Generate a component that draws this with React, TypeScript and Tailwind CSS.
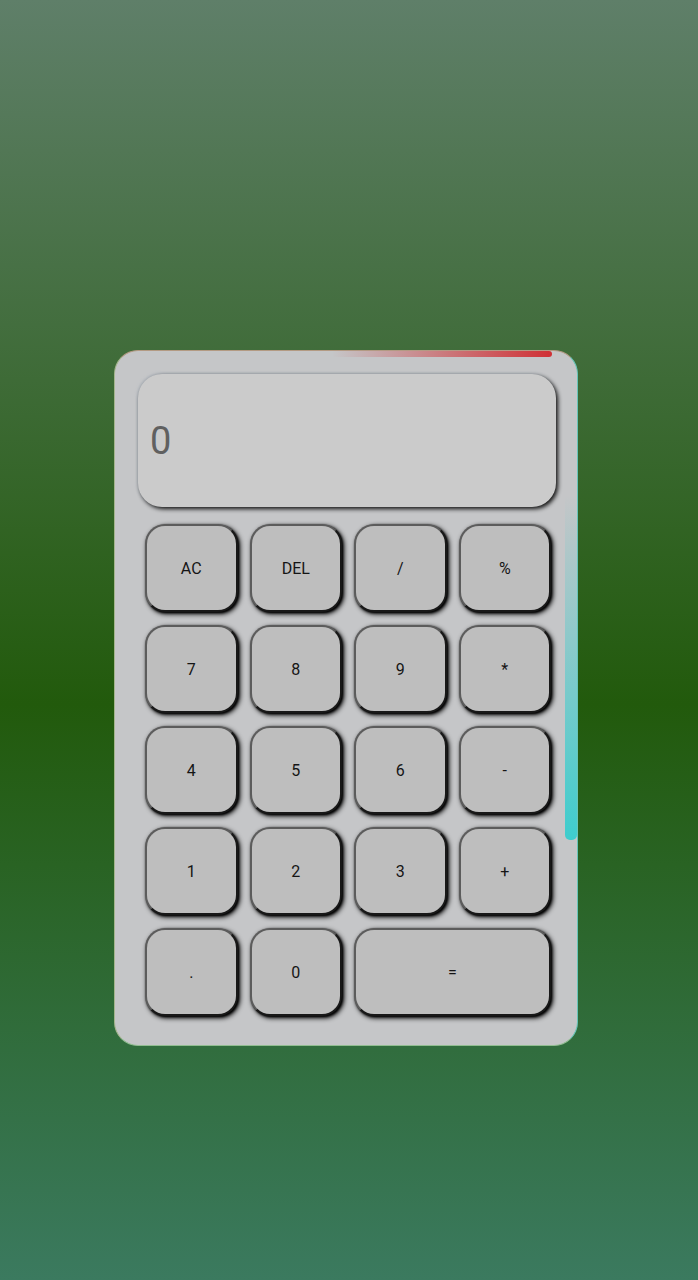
import { useState } from "react";

const keys = ["AC", "DEL", "/", "%", "7", "8", "9", "*", "4", "5", "6", "-", "1", "2", "3", "+", ".", "0", "="];

function calculate(expression: string): string {
  const tokens = expression.match(/\d+\.?\d*|\.\d+|[-+*/%]/g) ?? [];
  const terms: number[] = [];
  let operator = "+";
  for (const token of tokens) {
    const value = Number(token);
    if (Number.isNaN(value)) {
      operator = token;
      continue;
    }
    const last = terms.length - 1;
    if (operator === "+") terms.push(value);
    else if (operator === "-") terms.push(-value);
    else if (operator === "*") terms[last] *= value;
    else if (operator === "/") terms[last] /= value;
    else terms[last] %= value;
  }
  return String(terms.reduce((sum, term) => sum + term, 0));
}

export default function App() {
  const [value, setValue] = useState("");

  const press = (key: string) => {
    if (key === "AC") setValue("");
    else if (key === "DEL") setValue(value.slice(0, -1));
    else if (key === "=") setValue(calculate(value));
    else setValue(value + key);
  };

  return (
    <main className="flex min-h-screen items-center justify-center bg-[linear-gradient(180deg,#5f7f69_0%,#225a0c_55%,#3b7a5f_100%)] pt-[116px] pr-[6px] font-['Roboto',sans-serif]">
      <section
        aria-label="Calculator"
        className="relative w-full max-w-[464px] overflow-hidden rounded-3xl border border-t-[#b39a83] border-r-[#67c5b9] border-b-[#91bd91] border-l-[#a4b58d] bg-[#c5c6c8] pt-[23px] pr-[21px] pb-[29px] pl-[23px]"
      >
        <span className="absolute top-0 right-[25px] h-[6px] w-[220px] rounded-r-[3px] bg-linear-to-r from-[#d0303000] to-[#d03035]" />
        <span className="absolute top-[144px] right-0 h-[345px] w-[12px] rounded-b-[5px] bg-linear-to-b from-[#3ecdcd00] to-[#3ecdcd]" />
        <input
          aria-label="Result"
          type="text"
          placeholder="0"
          readOnly
          value={value}
          className="block h-[133px] w-full rounded-3xl bg-[#cbcbcb] px-3 text-[38px] text-[#444] shadow-[2px_2px_4px_#111,-1px_-1px_3px_#b4bac1] outline-none placeholder:text-[#606060]"
        />
        <div className="mt-[17px] ml-[7px] grid w-[406px] max-w-full auto-rows-[88px] grid-cols-4 gap-x-3 gap-y-[13px]">
          {keys.map((key) => (
            <button
              key={key}
              type="button"
              onClick={() => press(key)}
              className="rounded-[20px] border-2 border-t-[#5c5c5c] border-r-[#181818] border-b-[#181818] border-l-[#5c5c5c] bg-[#bebebe] pt-0.5 text-base text-[#151515] shadow-[2px_2px_5px_#000,1px_1px_2px_#111] last:col-span-2"
            >
              {key}
            </button>
          ))}
        </div>
      </section>
    </main>
  );
}
